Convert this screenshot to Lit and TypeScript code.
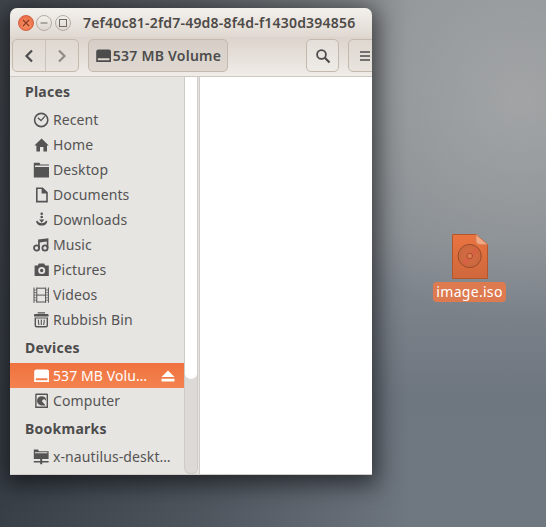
import { LitElement, html, svg, css } from 'lit'
import { customElement } from 'lit/decorators.js'

const icons: Record<string, unknown> = {
    recent: svg`<circle cx="8.2" cy="8" r="6.6" fill="none" stroke="currentColor" stroke-width="1.6"/><path d="M4.8 5.8 L8 8.6 L11.8 4.4" fill="none" stroke="currentColor" stroke-width="1.4"/>`,
    home: svg`<path d="M8.6 1.5 L15.8 8.4 L14 8.4 L14 14.5 L10.4 14.5 L10.4 10 L7 10 L7 14.5 L3.4 14.5 L3.4 8.4 L1.4 8.4 Z"/>`,
    desktop: svg`<path d="M0.8 0.8 L6.4 0.8 L7.4 2.6 L16.4 2.6 L16.4 15.6 L0.8 15.6 Z M2 3.6 L2 5 L16 5 L16 3.6 Z" fill-rule="evenodd"/>`,
    documents: svg`<path d="M3 0.4 L9.8 0.4 L14.8 5.2 L14.8 15.4 L3 15.4 Z M4.6 2 L4.6 13.8 L13.2 13.8 L13.2 6.4 L8.6 6.4 L8.6 2 Z" fill-rule="evenodd"/>`,
    downloads: svg`<circle cx="8.7" cy="1.8" r="1.3"/><circle cx="8.7" cy="5" r="1.3"/><path d="M6.1 7.4 L11.3 7.4 L8.7 10.8 Z"/><path d="M3 9.4 L4.4 8.6 C5.6 12.2 11.8 12.2 13 8.6 L14.4 9.4 C13.2 15 4.2 15 3 9.4 Z"/>`,
    music: svg`<circle cx="3.6" cy="11" r="2.6" fill="none" stroke="currentColor" stroke-width="1.8"/><circle cx="12" cy="11" r="2.6" fill="none" stroke="currentColor" stroke-width="1.8"/><path d="M5.1 11 L5.1 2.4 L15.4 1.2 L15.4 11 L13.7 11 L13.7 4.6 L6.8 5.4 L6.8 11 Z"/>`,
    pictures: svg`<path d="M1.6 3.6 L4.8 3.6 L5.8 1.4 L11.2 1.4 L12.2 3.6 L15.8 3.6 L15.8 14 L1.6 14 Z M8.7 5 A3.5 3.5 0 1 0 8.7 12 A3.5 3.5 0 1 0 8.7 5 Z M8.7 6.8 A1.7 1.7 0 1 1 8.7 10.2 A1.7 1.7 0 1 1 8.7 6.8 Z" fill-rule="evenodd"/>`,
    videos: svg`<path d="M1 0.5 V15.8 M3.8 0.5 V15.8 M12.6 0.5 V15.8 M15.4 0.5 V15.8 M3.8 1.2 H12.6 M3.8 8.1 H12.6 M3.8 15 H12.6" fill="none" stroke="currentColor" stroke-width="1"/><path d="M1 3 H3.8 M1 5.6 H3.8 M1 8.1 H3.8 M1 10.7 H3.8 M1 13.2 H3.8 M12.6 3 H15.4 M12.6 5.6 H15.4 M12.6 8.1 H15.4 M12.6 10.7 H15.4 M12.6 13.2 H15.4" stroke="currentColor" stroke-width="0.7"/>`,
    bin: svg`<path d="M1 3 Q1 2 2 2 L14.6 2 Q15.6 2 15.6 3 L15.6 4.6 L1 4.6 Z M4.6 0.2 L12 0.2 L12 1.5 L4.6 1.5 Z"/><path d="M1.6 5.4 L15 5.4 L15 13.4 Q15 15.4 13 15.4 L3.6 15.4 Q1.6 15.4 1.6 13.4 Z M3 6.6 L3 13.2 Q3 14 3.8 14 L12.8 14 Q13.6 14 13.6 13.2 L13.6 6.6 Z" fill-rule="evenodd"/><path d="M5.4 7.6 Q5.2 10.4 6 13 M8.3 7.6 V13 M11.2 7.6 Q11.4 10.4 10.6 13" stroke="currentColor" stroke-width="1.1" fill="none"/>`,
    volume: svg`<path d="M3.4 1.5 L14 1.5 Q16 1.5 16 3.5 L16 14 L1.2 14 L1.2 3.5 Q1.2 1.5 3.4 1.5 Z M2.8 10.2 L2.8 12.2 L14.4 12.2 L14.4 10.2 Z" fill-rule="evenodd"/>`,
    computer: svg`<path d="M3.2 0.5 L14 0.5 Q15 0.5 15 1.5 L15 15 L2.2 15 L2.2 1.5 Q2.2 0.5 3.2 0.5 Z M3.6 2 L3.6 13.6 L13.6 13.6 L13.6 2 Z" fill-rule="evenodd"/><path d="M8.6 3.2 A4.6 4.6 0 1 0 8.6 12.4 L12.6 12.4 L10 9.6 A1.8 1.8 0 1 1 12.6 7.4 L13.2 7.4 A4.6 4.6 0 0 0 8.6 3.2 Z" fill-rule="evenodd"/>`,
    network: svg`<path d="M0.8 0.6 L5 0.6 L6 2.2 L15.6 2.2 L15.6 10 L0.8 10 Z M2 3.2 L2 4.2 L14.4 4.2 L14.4 3.2 Z" fill-rule="evenodd"/><path d="M7.2 10 H9.2 V12 H15.6 V13.6 H9.2 V15.2 H7.2 V13.6 H0.8 V12 H7.2 Z"/>`,
}

interface Row {
    icon?: string
    label: string
    header?: boolean
    selected?: boolean
}

const rows: Row[] = [
    { label: 'Places', header: true },
    { icon: 'recent', label: 'Recent' },
    { icon: 'home', label: 'Home' },
    { icon: 'desktop', label: 'Desktop' },
    { icon: 'documents', label: 'Documents' },
    { icon: 'downloads', label: 'Downloads' },
    { icon: 'music', label: 'Music' },
    { icon: 'pictures', label: 'Pictures' },
    { icon: 'videos', label: 'Videos' },
    { icon: 'bin', label: 'Rubbish Bin' },
    { label: 'Devices', header: true },
    { icon: 'volume', label: '537 MB Volume', selected: true },
    { icon: 'computer', label: 'Computer' },
    { label: 'Bookmarks', header: true },
    { icon: 'network', label: 'x-nautilus-desktop:///' },
    { icon: 'network', label: '' },
]

@customElement('app-root')
export class AppRoot extends LitElement {
    static styles = css`
        :host {
            display: block;
            position: relative;
            width: 546px;
            height: 527px;
            overflow: hidden;
            font-family: 'Noto Sans', sans-serif;
            background:
                linear-gradient(90deg, rgba(38, 44, 52, 0.75) 0, rgba(38, 44, 52, 0.45) 200px, rgba(38, 44, 52, 0.08) 380px, transparent 410px),
                radial-gradient(ellipse 240px 220px at 520px 100px, rgba(168, 170, 170, 0.8), transparent),
                linear-gradient(#8e9295 0, #858b91 45%, #6e7680 75%, #6f7780 100%);
        }

        .window {
            position: absolute;
            left: 10px;
            top: 8px;
            width: 362px;
            height: 467px;
            display: flex;
            flex-direction: column;
            border-radius: 7px 7px 0 0;
            overflow: hidden;
            box-shadow: 0 5px 22px 5px rgba(0, 0, 0, 0.55);
        }

        .titlebar {
            height: 29px;
            flex: none;
            display: flex;
            align-items: center;
            padding-left: 8px;
            background: linear-gradient(#f3f0ec, #e0d9d2);
        }

        .wm {
            width: 16px;
            height: 16px;
            box-sizing: border-box;
            border-radius: 50%;
            margin-right: 2px;
            border: 1px solid #b3aca4;
            background: linear-gradient(#f3f0ec, #dcd6cf);
            display: flex;
            align-items: center;
            justify-content: center;
            color: #6f6a65;
        }

        .wm.close {
            border-color: #d0603f;
            background: radial-gradient(circle at 50% 60%, #f7946a, #e8623a);
            color: #8e3a22;
        }

        .wm.max {
            margin-left: 1px;
        }

        .title {
            margin-left: 10px;
            font-size: 14px;
            font-weight: 600;
            letter-spacing: 0.2px;
            color: #4d4a47;
            white-space: nowrap;
        }

        .toolbar {
            height: 37px;
            flex: none;
            display: flex;
            align-items: flex-start;
            padding: 2px 0 0 2px;
            background: linear-gradient(#dcd4cc, #f0ece8);
            border-bottom: 1px solid #cfc9c2;
            overflow: hidden;
        }

        .btn {
            height: 33px;
            box-sizing: border-box;
            border: 1px solid #c4b9ad;
            border-radius: 5px;
            background: linear-gradient(#e4dfd9, #efebe7);
            display: flex;
            align-items: center;
            justify-content: center;
            color: #4c4c4c;
            flex: none;
        }

        .nav {
            width: 67px;
            background: linear-gradient(#dfd8d1, #e8e3dd);
        }

        .nav span {
            flex: 1;
            height: 100%;
            display: flex;
            align-items: center;
            justify-content: center;
        }

        .nav span + span {
            border-left: 1px solid #cbc3ba;
            color: #8f8b87;
        }

        .path {
            width: 140px;
            margin-left: 9px;
            gap: 2px;
            background: linear-gradient(#d6cec6, #dfd9d2);
            font-size: 14px;
            font-weight: 600;
            letter-spacing: 0.25px;
        }

        .search {
            width: 33px;
            margin-left: 78px;
        }

        .menu {
            width: 33px;
            margin-left: 9px;
            background: linear-gradient(#dfd8d1, #e8e3dd);
        }

        .body {
            flex: 1;
            min-height: 0;
            display: flex;
            position: relative;
            border-bottom: 1px solid #d0cdc9;
        }

        .sidebar {
            width: 189px;
            flex: none;
            background: #e7e5e2;
            border-right: 1px solid #cfccc8;
            overflow: hidden;
        }

        .list {
            width: 174px;
        }

        .header {
            height: 31px;
            box-sizing: border-box;
            padding: 0 0 1px 15px;
            display: flex;
            align-items: center;
            font-size: 14px;
            font-weight: 700;
            letter-spacing: 0.25px;
            color: #4c4c4c;
        }

        .header.first {
            height: 30px;
            padding-bottom: 2px;
        }

        .row {
            height: 25px;
            display: flex;
            align-items: center;
            padding: 0 8px 0 23px;
            gap: 4px;
            font-size: 14px;
            letter-spacing: 0.1px;
            color: #545454;
        }

        .row svg {
            flex: none;
            fill: currentColor;
        }

        .row .label {
            flex: 1;
            min-width: 0;
            overflow: hidden;
            white-space: nowrap;
            text-overflow: ellipsis;
        }

        .row.selected {
            color: #fff;
            background: linear-gradient(#ef7240, #f4834f);
        }

        .row .eject {
            margin-left: 5px;
        }

        .content {
            flex: 1;
            background: #fff;
        }

        .track {
            position: absolute;
            left: 174px;
            top: 0;
            bottom: 0;
            width: 14px;
            box-sizing: border-box;
            background: #dcdad7;
            border: 1px solid #cfccc8;
            border-top: none;
            border-radius: 0 0 6px 6px;
        }

        .thumb {
            height: 303px;
            box-sizing: border-box;
            background: #fff;
            border-bottom: 1px solid #d8d5d1;
            border-radius: 0 0 6px 6px;
        }

        .desk-icon {
            position: absolute;
            left: 433px;
            top: 234px;
            width: 73px;
            display: flex;
            flex-direction: column;
            align-items: center;
            gap: 3px;
        }

        .desk-icon svg {
            display: block;
        }

        .desk-label {
            align-self: stretch;
            text-align: center;
            background: #dd7a50;
            color: #fff;
            border-radius: 4px;
            font-size: 14px;
            letter-spacing: 0.3px;
            line-height: 20px;
            white-space: nowrap;
        }
    `

    private renderRow(row: Row, first: boolean) {
        if (row.header) {
            return html`<div class="header ${first ? 'first' : ''}">${row.label}</div>`
        }
        return html`
            <div class="row ${row.selected ? 'selected' : ''}">
                <svg width="16" height="16" viewBox="0 0 16 16">${icons[row.icon!]}</svg>
                <span class="label">${row.label}</span>
                ${row.selected
                    ? html`<svg class="eject" width="16" height="16" viewBox="0 0 16 16"><path d="M8 2.5 L14.5 9 L1.5 9 Z M1.5 10.8 H14.5 V13.4 H1.5 Z"/></svg>`
                    : ''}
            </div>
        `
    }

    render() {
        return html`
            <div class="window">
                <div class="titlebar">
                    <span class="wm close">
                        <svg width="8" height="8" viewBox="0 0 8 8"><path d="M1 1 L7 7 M7 1 L1 7" stroke="currentColor" stroke-width="1.3"/></svg>
                    </span>
                    <span class="wm">
                        <svg width="8" height="8" viewBox="0 0 8 8"><path d="M0.5 4 H7.5" stroke="currentColor" stroke-width="1.1"/></svg>
                    </span>
                    <span class="wm max">
                        <svg width="8" height="8" viewBox="0 0 8 8"><rect x="0.5" y="0.5" width="7" height="7" fill="none" stroke="currentColor"/></svg>
                    </span>
                    <span class="title">7ef40c81-2fd7-49d8-8f4d-f1430d394856</span>
                </div>
                <div class="toolbar">
                    <div class="btn nav">
                        <span><svg width="12" height="14" viewBox="0 0 12 14"><path d="M9 1.5 L3.5 7 L9 12.5" fill="none" stroke="currentColor" stroke-width="2.2"/></svg></span>
                        <span><svg width="12" height="14" viewBox="0 0 12 14"><path d="M3 1.5 L8.5 7 L3 12.5" fill="none" stroke="currentColor" stroke-width="2.2"/></svg></span>
                    </div>
                    <div class="btn path">
                        <svg width="16" height="16" viewBox="0 0 16 16" fill="currentColor">${icons.volume}</svg>
                        537 MB Volume
                    </div>
                    <div class="btn search">
                        <svg width="16" height="16" viewBox="0 0 16 16"><circle cx="6.5" cy="6.5" r="4.4" fill="none" stroke="currentColor" stroke-width="1.8"/><path d="M9.8 9.8 L14.5 14.5" stroke="currentColor" stroke-width="2.2"/></svg>
                    </div>
                    <div class="btn menu">
                        <svg width="12" height="12" viewBox="0 0 12 12"><path d="M1 2 H11 M1 6 H11 M1 10 H11" stroke="currentColor" stroke-width="1.6"/></svg>
                    </div>
                </div>
                <div class="body">
                    <div class="sidebar">
                        <div class="list">${rows.map((r, i) => this.renderRow(r, i === 0))}</div>
                    </div>
                    <div class="track"><div class="thumb"></div></div>
                    <div class="content"></div>
                </div>
            </div>
            <div class="desk-icon">
                <svg width="36" height="45" viewBox="0 0 36 45">
                    <defs>
                        <linearGradient id="iso" x1="0" y1="0" x2="0" y2="1">
                            <stop offset="0" stop-color="#ea7440"/>
                            <stop offset="1" stop-color="#cf683c"/>
                        </linearGradient>
                        <radialGradient id="disc">
                            <stop offset="0" stop-color="#d96a44"/>
                            <stop offset="1" stop-color="#c9683e"/>
                        </radialGradient>
                    </defs>
                    <path d="M0.5 0.5 L24 0.5 L35.5 10.5 L35.5 44.5 L0.5 44.5 Z" fill="url(#iso)" stroke="#b5552c"/>
                    <path d="M24 0.5 L35.5 10.5 L28 10.5 Q24 10.5 24 7 Z" fill="#f0a885" stroke="#d07a52" stroke-width="0.6"/>
                    <circle cx="17.7" cy="22" r="11.6" fill="url(#disc)" stroke="#9c4a2a"/>
                    <path d="M10 29 L24 13.5 L27 16 L13 31.5 Z" fill="#e2564a" opacity="0.45"/>
                    <circle cx="17.7" cy="22" r="2.8" fill="#e27c50" stroke="#8f4529" stroke-width="0.8"/>
                </svg>
                <span class="desk-label">image.iso</span>
            </div>
        `
    }
}
